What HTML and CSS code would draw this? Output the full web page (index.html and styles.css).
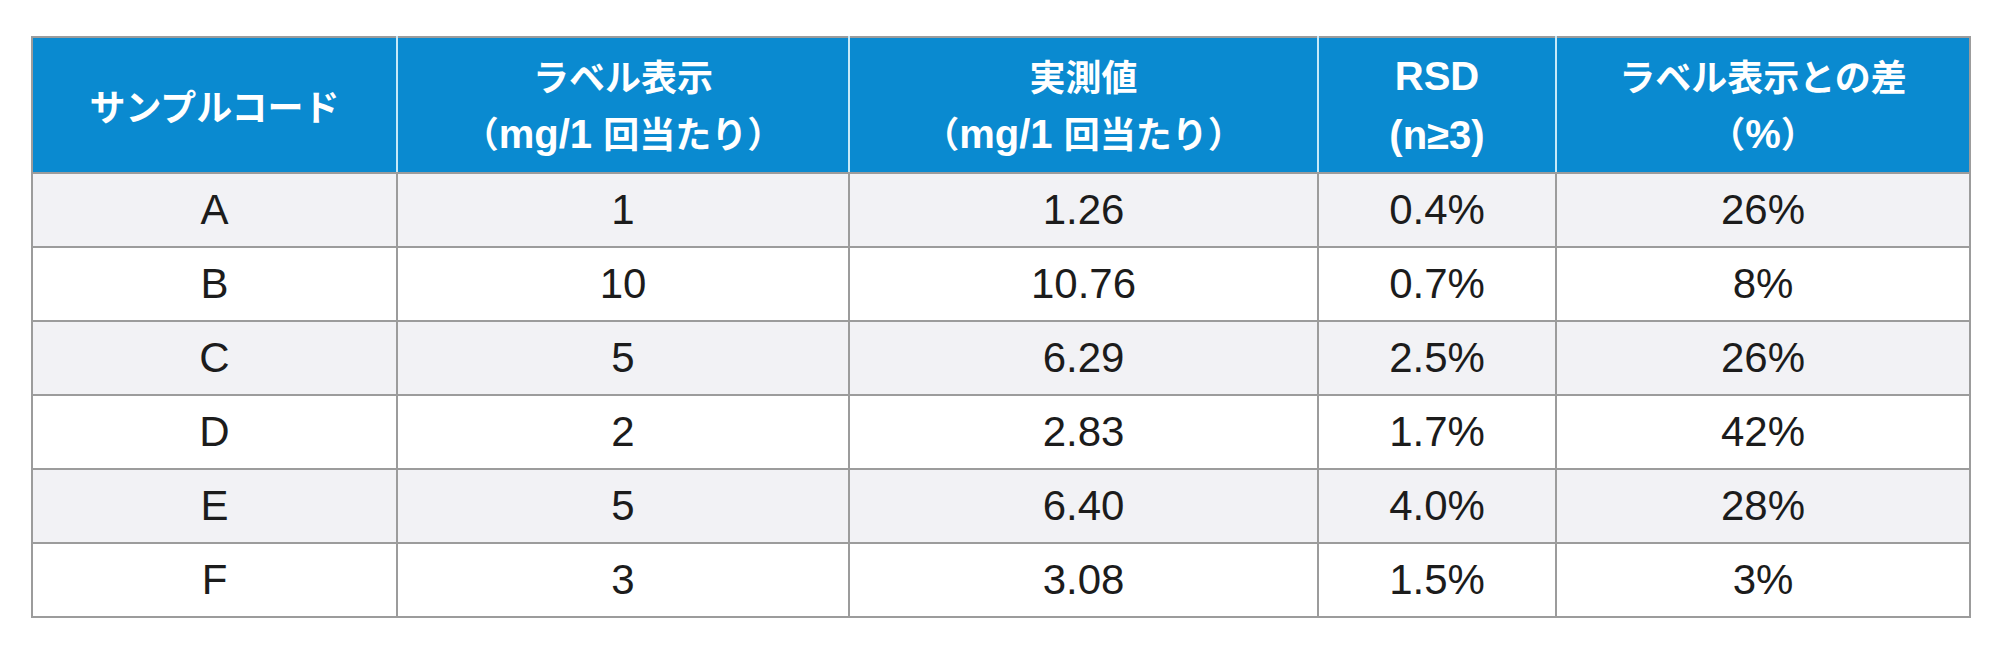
FILE: index.html
```html
<!DOCTYPE html>
<html lang="ja">
<head>
<meta charset="utf-8">
<title>測定結果</title>
<link rel="stylesheet" href="styles.css">
</head>
<body>
<div class="page">
  <table class="results">
    <colgroup>
      <col class="c1"><col class="c2"><col class="c3"><col class="c4"><col class="c5">
    </colgroup>
    <thead>
      <tr>
        <th>サンプルコード</th>
        <th>ラベル表示<br>（<span class="lat">mg/1 </span>回当たり）</th>
        <th>実測値<br>（<span class="lat">mg/1 </span>回当たり）</th>
        <th><span class="lat">RSD</span><br><span class="lat">(n≥3)</span></th>
        <th>ラベル表示との差<br>（<span class="lat">%</span>）</th>
      </tr>
    </thead>
    <tbody>
      <tr class="alt"><td>A</td><td>1</td><td>1.26</td><td>0.4%</td><td>26%</td></tr>
      <tr><td>B</td><td>10</td><td>10.76</td><td>0.7%</td><td>8%</td></tr>
      <tr class="alt"><td>C</td><td>5</td><td>6.29</td><td>2.5%</td><td>26%</td></tr>
      <tr><td>D</td><td>2</td><td>2.83</td><td>1.7%</td><td>42%</td></tr>
      <tr class="alt"><td>E</td><td>5</td><td>6.40</td><td>4.0%</td><td>28%</td></tr>
      <tr><td>F</td><td>3</td><td>3.08</td><td>1.5%</td><td>3%</td></tr>
    </tbody>
  </table>
</div>
</body>
</html>
```

FILE: styles.css
```css
html, body {
  margin: 0;
  padding: 0;
  background: #ffffff;
}

.page {
  padding: 36px 31px 0 31px;
}

.results {
  width: 1938px;
  table-layout: fixed;
  border-collapse: collapse;
  border: 2px solid #9c9c9c;
}

.c1 { width: 365px; }
.c2 { width: 452px; }
.c3 { width: 469px; }
.c4 { width: 238px; }
.c5 { width: 414px; }

.results th {
  height: 134px;
  padding: 0;
  background: #0a8ad0;
  color: #ffffff;
  font-family: "Noto Sans CJK JP", sans-serif;
  font-weight: bold;
  font-size: 36px;
  line-height: 57px;
  text-align: center;
  vertical-align: middle;
  border-top: 2px solid #9c9c9c;
  border-bottom: 2px solid #9c9c9c;
  border-left: 2px solid #c6e9f8;
  border-right: 2px solid #c6e9f8;
}

.results th .lat {
  font-family: "Liberation Sans", "Noto Sans CJK JP", sans-serif;
  font-size: 40px;
  font-weight: bold;
}

.results th:first-child {
  border-left: 2px solid #9c9c9c;
}

.results th:last-child {
  border-right: 2px solid #9c9c9c;
}

.results td {
  height: 72px;
  padding: 0;
  font-family: "Liberation Sans", "Noto Sans", sans-serif;
  font-size: 42px;
  line-height: 48px;
  color: #1c1c1c;
  text-align: center;
  vertical-align: middle;
  border: 2px solid #9c9c9c;
  background: #ffffff;
}

.results tr.alt td {
  background: #f2f2f5;
}
```
